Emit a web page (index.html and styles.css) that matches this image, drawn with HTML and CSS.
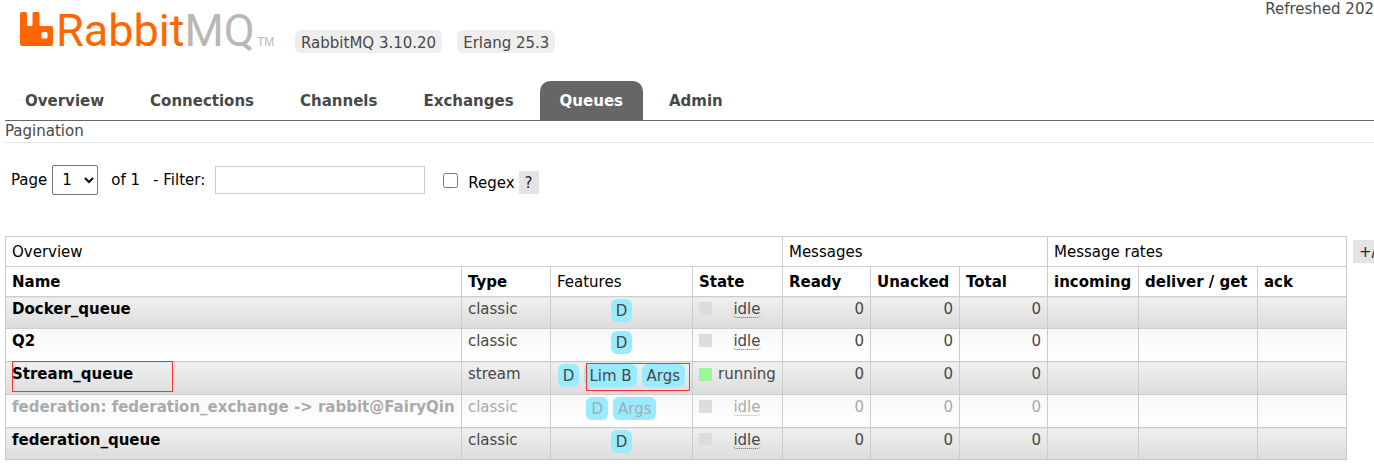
FILE: index.html
```html
<!DOCTYPE html>
<html lang="en">
<head>
<meta charset="utf-8">
<title>RabbitMQ Management</title>
<link rel="stylesheet" href="styles.css">
</head>
<body>
<header class="header">
  <svg class="logo" width="258" height="52" viewBox="0 0 258 52" role="img" aria-label="RabbitMQ">
    <path class="logo-mark" fill-rule="evenodd" d="M3 12h3.500q1.500 0 1.500 1.500v11q0 1.500 1.500 1.500h2.500q1.500 0 1.500-1.500v-11q0-1.500 1.500-1.500h4q1.500 0 1.500 1.500v11q0 1.500 1.500 1.500h10.500q1.500 0 1.500 1.500v16.500q0 2-2 2h-29q-2 0-2-2v-30.500q0-1.500 2-1.500zM24 32q-1.500 0-1.500 1.500v3.500q0 1.500 1.500 1.500h3q1.500 0 1.500-1.500v-3.500q0-1.500-1.500-1.500z"/>
    <text class="logo-text" x="37" y="46"><tspan class="logo-rabbit">Rabbit</tspan><tspan class="logo-mq">MQ</tspan></text>
    <text class="logo-tm" x="238" y="46">TM</text>
  </svg>
  <ul class="versions">
    <li class="version">RabbitMQ 3.10.20</li>
    <li class="version">Erlang 25.3</li>
  </ul>
  <div class="refreshed">Refreshed 202</div>
</header>
<nav class="tabs">
  <a class="tab" href="#">Overview</a>
  <a class="tab" href="#">Connections</a>
  <a class="tab" href="#">Channels</a>
  <a class="tab" href="#">Exchanges</a>
  <a class="tab selected" href="#">Queues</a>
  <a class="tab" href="#">Admin</a>
</nav>
<main class="main">
  <h2 class="section-title">Pagination</h2>
  <form class="filter">
    <label for="page">Page</label>
    <select id="page" class="page-select"><option>1</option></select>
    <span class="page-total">of 1</span>
    <label class="filter-label" for="filter">- Filter:</label>
    <input id="filter" class="filter-input" type="text">
    <input id="regex" class="regex-box" type="checkbox">
    <label class="regex-label" for="regex">Regex</label>
    <button class="help" type="button">?</button>
  </form>
  <div class="list">
    <table class="queues">
      <colgroup>
        <col><col class="c-type"><col class="c-features"><col class="c-state"><col class="c-count"><col class="c-type"><col class="c-count"><col class="c-incoming"><col class="c-deliver"><col class="c-type">
      </colgroup>
      <thead>
        <tr><th class="plain" colspan="4">Overview</th><th class="plain" colspan="3">Messages</th><th class="plain" colspan="3">Message rates</th></tr>
        <tr><th>Name</th><th>Type</th><th class="plain">Features</th><th>State</th><th>Ready</th><th>Unacked</th><th>Total</th><th>incoming</th><th>deliver / get</th><th>ack</th></tr>
      </thead>
      <tbody>
        <tr class="odd short"><td><a class="queue" href="#">Docker_queue</a></td><td>classic</td><td><div class="tags"><span class="tag">D</span></div></td><td><div class="state"><i class="dot"></i><span class="status"><abbr>idle</abbr></span></div></td><td class="num">0</td><td class="num">0</td><td class="num">0</td><td></td><td></td><td></td></tr>
        <tr><td><a class="queue" href="#">Q2</a></td><td>classic</td><td><div class="tags"><span class="tag">D</span></div></td><td><div class="state"><i class="dot"></i><span class="status"><abbr>idle</abbr></span></div></td><td class="num">0</td><td class="num">0</td><td class="num">0</td><td></td><td></td><td></td></tr>
        <tr class="odd"><td><div class="anchor"><a class="queue" href="#">Stream_queue</a><i class="mark mark-name"></i></div></td><td>stream</td><td><div class="tags anchor"><span class="tag">D</span><span class="tag">Lim B</span><span class="tag">Args</span><i class="mark mark-tags"></i></div></td><td><div class="state"><i class="dot running"></i><span class="status">running</span></div></td><td class="num">0</td><td class="num">0</td><td class="num">0</td><td></td><td></td><td></td></tr>
        <tr class="faded"><td><a class="queue" href="#">federation: federation_exchange -&gt; rabbit@FairyQin</a></td><td>classic</td><td><div class="tags"><span class="tag">D</span><span class="tag">Args</span></div></td><td><div class="state"><i class="dot"></i><span class="status"><abbr>idle</abbr></span></div></td><td class="num">0</td><td class="num">0</td><td class="num">0</td><td></td><td></td><td></td></tr>
        <tr class="odd short"><td><a class="queue" href="#">federation_queue</a></td><td>classic</td><td><div class="tags"><span class="tag">D</span></div></td><td><div class="state"><i class="dot"></i><span class="status"><abbr>idle</abbr></span></div></td><td class="num">0</td><td class="num">0</td><td class="num">0</td><td></td><td></td><td></td></tr>
      </tbody>
    </table>
    <div class="columns"><button class="help" type="button">+/-</button></div>
  </div>
</main>
</body>
</html>
```
FILE: styles.css
```css
* { box-sizing: border-box; }
body {
  margin: 0;
  overflow: hidden;
  background: #fff;
  color: #484848;
  font: 15px/20px Verdana, "DejaVu Sans", sans-serif;
}
a { color: inherit; text-decoration: none; }

.header { display: flex; height: 81px; padding-left: 19px; }
.logo { flex: none; overflow: visible; }
.logo-mark, .logo-rabbit { fill: #f60; }
.logo-mq { fill: #b8b8b8; }
.logo-text { font: 45px Roboto, sans-serif; }
.logo-tm { fill: #b8b8b8; font: 12px "Liberation Sans", Arial, sans-serif; }
.versions { display: flex; gap: 15px; margin: 30px 0 0 18px; padding: 0; list-style: none; }
.version { height: 23px; padding: 3px 6px 0; border-radius: 6px; background: #eee; white-space: nowrap; }
.refreshed { margin-left: auto; margin-top: -1px; white-space: nowrap; }

.tabs { display: flex; gap: 6px; margin-left: 5px; border-bottom: 1px solid #666; }
.tab { height: 39px; padding: 10px 20px 9px; border-radius: 10px 10px 0 0; font-weight: bold; }
.tab.selected { background: #666; color: #fff; }

.main { margin-left: 5px; }
.section-title { margin: 0; height: 22px; border-bottom: 1px solid #e4e4e4; font-size: 15px; font-weight: normal; }

.filter { display: flex; align-items: center; height: 74px; margin-bottom: 19px; padding-left: 6px; color: #000; }
.page-select { width: 46px; height: 30px; margin: 0 13px 0 5px; padding-left: 5px; border: 1px solid #767676; border-radius: 2px; background: #fff; color: #000; font: inherit; }
.filter-label { margin: 0 10px 0 13px; }
.filter-input { width: 210px; height: 28px; border: 1px solid #ccc; font: inherit; }
.regex-box { width: 15px; height: 15px; margin: 0 10px 0 18px; }
.regex-label { margin-top: 5px; }
.help { height: 23px; padding: 0 6px; border: 0; background: #e4e4e4; color: #222; font: inherit; }
.filter .help { margin: 5px 0 0 4px; }

.list { display: flex; align-items: flex-start; }
.queues { flex: 1; width: 100%; table-layout: fixed; border-collapse: collapse; }
.c-type { width: 89px; }
.c-features { width: 142px; }
.c-state { width: 90px; }
.c-count { width: 88px; }
.c-incoming { width: 91px; }
.c-deliver { width: 119px; }
th, td { border: 1px solid #ccc; white-space: nowrap; }
th { height: 30px; padding: 4px 6px; color: #000; font-weight: bold; text-align: left; }
.plain { font-weight: normal; }
td { height: 33px; padding: 2px 6px 4px; vertical-align: top; background: linear-gradient(#f8f8f8, #fff); }
.odd td { background: linear-gradient(#f0f0f0, #dcdcdc); }
.short td { height: 32px; }
.queue { color: #000; font-weight: bold; }
.num { text-align: right; }
.tags { display: flex; justify-content: center; gap: 5px; }
.tag { height: 23px; padding: 2px 5px 0; border-radius: 6px; background: #99ebff; }
.state { display: flex; align-items: center; gap: 6px; }
.dot { flex: none; width: 13px; height: 13px; background: #ddd; }
.dot.running { background: #98f898; }
.status { flex: 1; text-align: center; }
abbr { display: block; width: fit-content; height: 19px; margin: 0 auto; border-bottom: 1px dotted #666; border-radius: 4px; }
.faded td, .faded .queue { color: #aaa; }
.faded abbr { border-color: #aaa; }

.anchor { position: relative; }
.mark { position: absolute; border: 1px solid #f33; }
.mark-name { left: 0; top: -3px; width: 161px; height: 31px; }
.mark-tags { right: -4px; top: -1px; width: 104px; height: 28px; }

.columns { flex: none; width: 21px; margin: 4px 0 0 6px; overflow: hidden; }
```
